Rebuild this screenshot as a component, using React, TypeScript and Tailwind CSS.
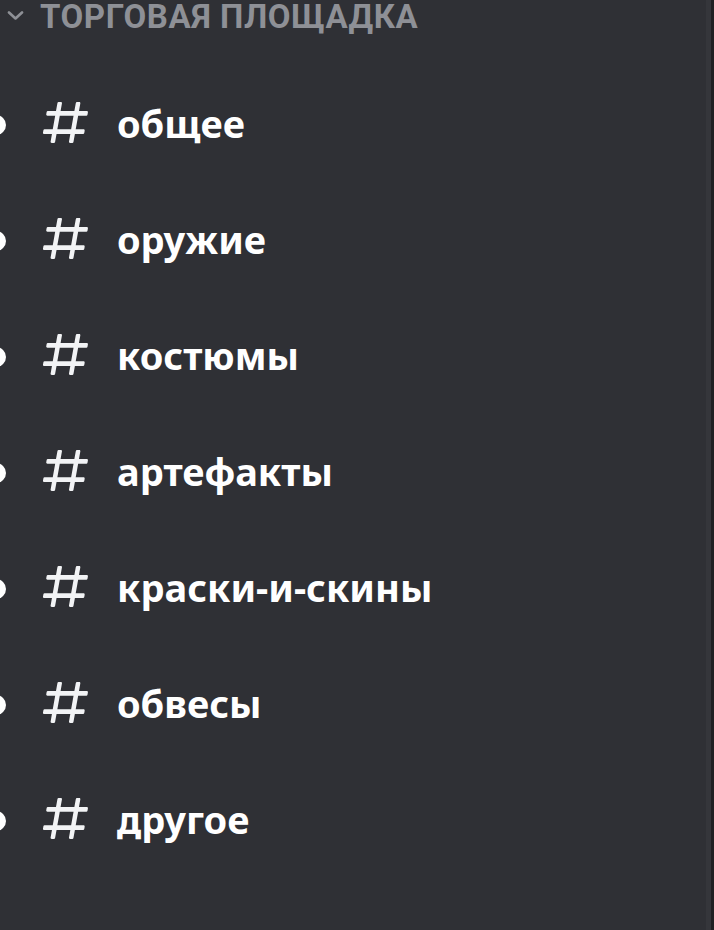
const channels = [
  "общее",
  "оружие",
  "костюмы",
  "артефакты",
  "краски-и-скины",
  "обвесы",
  "другое",
];

function Hash() {
  return (
    <svg width="45" height="41" viewBox="2.1 3 19.6 18" fill="currentColor" preserveAspectRatio="none">
      <path d="M5.88657 21C5.57547 21 5.3399 20.7189 5.39427 20.4126L6.00001 17H2.59511C2.28449 17 2.04905 16.7198 2.10259 16.4138L2.27759 15.4138C2.31946 15.1746 2.52722 15 2.77011 15H6.35001L7.41001 9H4.00511C3.69449 9 3.45905 8.71977 3.51259 8.41381L3.68759 7.41381C3.72946 7.17456 3.93722 7 4.18011 7H7.76001L8.39677 3.41262C8.43914 3.17391 8.64664 3 8.88907 3H9.87344C10.1845 3 10.4201 3.28107 10.3657 3.58738L9.76001 7H15.76L16.3968 3.41262C16.4391 3.17391 16.6466 3 16.8891 3H17.8734C18.1845 3 18.4201 3.28107 18.3657 3.58738L17.76 7H21.1649C21.4755 7 21.711 7.28023 21.6574 7.58619L21.4824 8.58619C21.4406 8.82544 21.2328 9 20.9899 9H17.41L16.35 15H19.7549C20.0655 15 20.301 15.2802 20.2474 15.5862L20.0724 16.5862C20.0306 16.8254 19.8228 17 19.5799 17H16L15.3632 20.5874C15.3209 20.8261 15.1134 21 14.8709 21H13.8866C13.5755 21 13.3399 20.7189 13.3943 20.4126L14 17H8.00001L7.36325 20.5874C7.32088 20.8261 7.11337 21 6.87094 21H5.88657ZM9.41045 9L8.35045 15H14.3504L15.4104 9H9.41045Z" />
    </svg>
  );
}

export default function App() {
  return (
    <div className="flex h-[930px] w-[714px] overflow-hidden bg-[#2f3035]">
      <div className="flex-1">
        {/*category header*/}
        <div className="flex items-center pt-[1px] text-[#8e9096]">
          <svg width="17" height="9" viewBox="0 0 17 9" className="ml-[7px] mt-[-3px]" fill="none" stroke="currentColor" strokeWidth="2.6" strokeLinecap="round" strokeLinejoin="round">
            <path d="M2 1.5 L8.5 7.5 L15 1.5" />
          </svg>
          <span className="ml-[16px] font-['Roboto',sans-serif] text-[33px] font-bold uppercase leading-[32px] tracking-[0.55px]">
            Торговая площадка
          </span>
        </div>

        {/*channels*/}
        <div className="mt-[34px]">
          {channels.map((name) => (
            <div key={name} className="relative flex h-[116px] items-center">
              <span className="absolute left-[-14px] top-[48px] h-[20px] w-[20px] rounded-full bg-white" />
              <span className="ml-[43px] mt-[-5px] text-[#f2f3f5]">
                <Hash />
              </span>
              <span className="ml-[29px] pb-[4px] font-['Noto_Sans',sans-serif] text-[38px] font-bold leading-[48px] text-white">
                {name}
              </span>
            </div>
          ))}
        </div>
      </div>
      <div className="w-[5px] bg-[#35363b]" />
      <div className="w-[3px] bg-[#1f2023]" />
    </div>
  );
}
